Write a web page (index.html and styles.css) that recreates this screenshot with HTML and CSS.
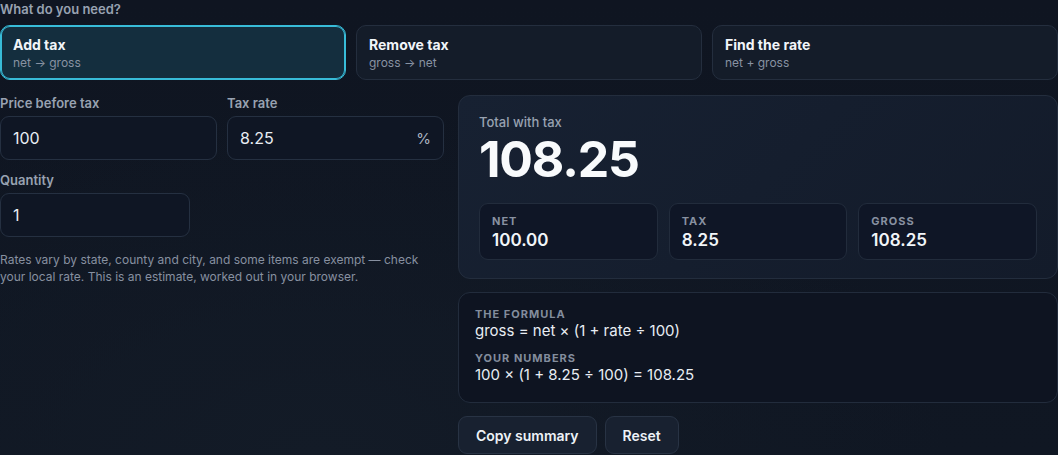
FILE: index.html
```html
<!DOCTYPE html>
<html lang="en">
<head>
<meta charset="utf-8">
<title>Sales tax calculator</title>
<link rel="stylesheet" href="styles.css">
</head>
<body>
<main class="app">
  <div class="question">What do you need?</div>
  <div class="modes">
    <button class="mode active"><span class="mode-title">Add tax</span><span class="mode-sub">net → gross</span></button>
    <button class="mode"><span class="mode-title">Remove tax</span><span class="mode-sub">gross → net</span></button>
    <button class="mode"><span class="mode-title">Find the rate</span><span class="mode-sub">net + gross</span></button>
  </div>
  <div class="layout">
    <section class="inputs">
      <div class="row">
        <label class="field">
          <span class="label">Price before tax</span>
          <span class="input"><span class="value">100</span></span>
        </label>
        <label class="field">
          <span class="label">Tax rate</span>
          <span class="input"><span class="value">8.25</span><span class="suffix">%</span></span>
        </label>
      </div>
      <label class="field qty">
        <span class="label">Quantity</span>
        <span class="input"><span class="value">1</span></span>
      </label>
      <p class="note">Rates vary by state, county and city, and some items are exempt — check your local rate. This is an estimate, worked out in your browser.</p>
    </section>
    <section class="outputs">
      <div class="result">
        <div class="result-label">Total with tax</div>
        <div class="result-value">108.25</div>
        <div class="stats">
          <div class="stat"><div class="stat-label">NET</div><div class="stat-value">100.00</div></div>
          <div class="stat"><div class="stat-label">TAX</div><div class="stat-value">8.25</div></div>
          <div class="stat"><div class="stat-label">GROSS</div><div class="stat-value">108.25</div></div>
        </div>
      </div>
      <div class="formula">
        <div class="f-label">THE FORMULA</div>
        <div class="f-text">gross = net × (1 + rate ÷ 100)</div>
        <div class="f-label second">YOUR NUMBERS</div>
        <div class="f-text">100 × (1 + 8.25 ÷ 100) = 108.25</div>
      </div>
      <div class="actions">
        <button class="btn">Copy summary</button>
        <button class="btn">Reset</button>
      </div>
    </section>
  </div>
</main>
</body>
</html>
```
FILE: styles.css
```css
* { box-sizing: border-box; }
html, body { margin: 0; padding: 0; }
body {
  font-family: Inter, "Noto Sans", "Liberation Sans", sans-serif;
  color: #e8edf3;
  background: radial-gradient(ellipse 900px 500px at 30% 100%, #131b27 0%, rgba(19,27,39,0) 70%),
              linear-gradient(180deg, #0f1521 0%, #101723 100%);
  min-height: 455px;
  overflow: hidden;
}
.app { width: 1058px; }
.question {
  font-size: 13px;
  line-height: 18px;
  font-weight: 600;
  color: #98a2b1;
}
.modes {
  margin-top: 7px;
  display: grid;
  grid-template-columns: repeat(3, 1fr);
  gap: 10px;
}
.mode {
  display: flex;
  flex-direction: column;
  align-items: flex-start;
  text-align: left;
  height: 55px;
  padding: 9px 12px 10px;
  border: 1px solid #242e3e;
  border-radius: 10px;
  background: #141c29;
  font-family: inherit;
  color: #f1f5f9;
}
.mode.active {
  background: #142e3e;
  border-color: #38bcd8;
  box-shadow: inset 0 0 0 1px #38bcd8;
}
.mode-title { font-size: 14px; line-height: 19px; font-weight: 700; }
.mode-sub { font-size: 12px; line-height: 17px; color: #8892a2; }
.layout {
  margin-top: 15px;
  display: grid;
  grid-template-columns: 444px 1fr;
  gap: 14px;
}
.inputs { display: flex; flex-direction: column; }
.row { display: grid; grid-template-columns: 1fr 1fr; gap: 10px; }
.field { display: flex; flex-direction: column; }
.label {
  font-size: 13px;
  line-height: 17px;
  font-weight: 600;
  color: #98a2b1;
  margin-bottom: 4px;
}
.input {
  height: 44px;
  display: flex;
  align-items: center;
  justify-content: space-between;
  padding: 0 12px;
  border: 1px solid #253041;
  border-radius: 9px;
  background: #0f1624;
  font-size: 16px;
  color: #e8edf3;
}
.suffix { font-size: 15px; color: #aab3c0; }
.qty { margin-top: 12px; width: 190px; }
.note {
  margin: 14px 0 0;
  font-size: 12px;
  line-height: 17px;
  color: #8790a0;
}
.outputs { display: flex; flex-direction: column; }
.result {
  padding: 17px 20px 18px;
  border: 1px solid #232d3d;
  border-radius: 12px;
  background: linear-gradient(135deg, #172132 0%, #131b2a 100%);
}
.result-label { font-size: 13px; line-height: 18px; font-weight: 500; color: #98a2b1; }
.result-value {
  font-size: 50px;
  line-height: 56px;
  font-weight: 700;
  letter-spacing: -1.2px;
  color: #f8fafc;
}
.stats {
  margin-top: 16px;
  display: grid;
  grid-template-columns: repeat(3, 1fr);
  gap: 11px;
}
.stat {
  padding: 10px 12px 8px;
  border: 1px solid #222c3c;
  border-radius: 9px;
  background: #0f1626;
}
.stat-label {
  font-size: 11px;
  line-height: 14px;
  font-weight: 700;
  letter-spacing: 1px;
  color: #8891a1;
}
.stat-value {
  margin-top: 1px;
  font-size: 17px;
  line-height: 22px;
  font-weight: 600;
  color: #f1f5f9;
}
.formula {
  margin-top: 13px;
  padding: 14px 16px 17px;
  border: 1px solid #222c3c;
  border-radius: 12px;
  background: #0e1421;
}
.f-label {
  font-size: 11px;
  line-height: 14px;
  font-weight: 700;
  letter-spacing: 1px;
  color: #838d9d;
}
.f-label.second { margin-top: 10px; }
.f-text { font-size: 15px; line-height: 20px; color: #e8edf3; }
.actions { margin-top: 13px; display: flex; gap: 8px; }
.btn {
  height: 38px;
  padding: 0 17px;
  border: 1px solid #283344;
  border-radius: 9px;
  background: #182130;
  color: #eef2f7;
  font-family: inherit;
  font-size: 14px;
  font-weight: 600;
}
```
